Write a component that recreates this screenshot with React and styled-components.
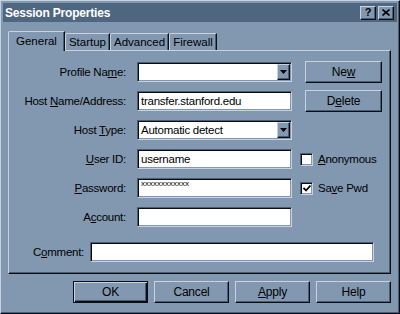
import React from "react";
import styled, { createGlobalStyle } from "styled-components";

const C = {
  face: "#8298b1",
  light: "#c7d2de",
  shadow: "#4b5d74",
  dark: "#0a0d12",
  title: "#4f6681",
};

const GlobalStyle = createGlobalStyle`
  html, body { margin: 0; padding: 0; background: ${C.face}; }
  body { font-family: "Liberation Sans", Arial, sans-serif; font-size: 11px; color: #000; }
`;

const Window = styled.div`
  box-sizing: border-box;
  width: 400px;
  height: 314px;
  padding: 2px;
  background: ${C.face};
  border: 1px solid;
  border-color: ${C.light} ${C.dark} ${C.dark} ${C.light};
  box-shadow: inset -1px -1px 0 ${C.shadow};
  display: flex;
  flex-direction: column;
`;

const TitleBar = styled.div`
  height: 19px;
  background: ${C.title};
  display: flex;
  align-items: center;
  padding: 0 3px 0 2px;
  gap: 2px;
`;

const Title = styled.div`
  flex: 1;
  color: #fff;
  font-weight: bold;
  font-size: 12px;
  letter-spacing: -0.2px;
`;

const TitleButton = styled.div`
  box-sizing: border-box;
  width: 16px;
  height: 14px;
  background: ${C.face};
  border: 1px solid;
  border-color: ${C.light} ${C.dark} ${C.dark} ${C.light};
  box-shadow: inset -1px -1px 0 ${C.shadow};
  display: flex;
  align-items: center;
  justify-content: center;
  font-weight: bold;
  font-size: 11px;
  line-height: 1;
`;

const TabsRow = styled.div`
  margin-top: 9px;
  height: 19px;
  padding-left: 5px;
  display: flex;
  align-items: flex-end;
`;

const Tab = styled.div`
  box-sizing: border-box;
  position: relative;
  z-index: ${(p) => (p.$active ? 1 : 0)};
  height: ${(p) => (p.$active ? 20 : 17)}px;
  margin-bottom: ${(p) => (p.$active ? -1 : 0)}px;
  padding: 0 ${(p) => (p.$active ? 7 : 3)}px;
  padding-bottom: ${(p) => (p.$active ? 2 : 0)}px;
  background: ${C.face};
  border: 1px solid;
  border-bottom: none;
  border-color: ${C.light} ${C.dark} transparent ${C.light};
  border-top-left-radius: 2px;
  box-shadow: inset -1px 0 0 ${C.shadow};
  display: flex;
  align-items: center;
  font-size: 11.5px;
  white-space: nowrap;
`;

const Panel = styled.div`
  box-sizing: border-box;
  margin: 0 6px 0 5px;
  height: 224px;
  border: 1px solid;
  border-color: ${C.light} ${C.dark} ${C.dark} ${C.light};
  box-shadow: inset -1px -1px 0 ${C.shadow};
  padding-top: 11px;
`;

const Form = styled.div`
  display: grid;
  grid-template-columns: 117px 155px 77px;
  grid-auto-rows: 20px;
  column-gap: 11px;
  row-gap: 9px;
  align-items: center;
`;

const Label = styled.div`
  text-align: right;
  font-size: 11.5px;
  letter-spacing: -0.25px;
  white-space: nowrap;
`;

const Key = styled.span`
  text-decoration: underline;
  text-underline-offset: 1px;
`;

const Field = styled.div`
  box-sizing: border-box;
  height: 20px;
  width: ${(p) => p.$width || 155}px;
  background: #fff;
  border: 1px solid;
  border-color: ${C.shadow} ${C.light} ${C.light} ${C.shadow};
  box-shadow: inset 1px 1px 0 ${C.dark}, inset -1px -1px 0 ${C.face};
  display: flex;
  align-items: ${(p) => (p.$masked ? "flex-start" : "center")};
  padding: 0 ${(p) => (p.$select ? 1 : 3)}px 0 3px;
  font-size: ${(p) => (p.$masked ? 8 : 11.5)}px;
  letter-spacing: ${(p) => (p.$masked ? 0 : -0.25)}px;
  white-space: nowrap;
  overflow: hidden;
`;

const FieldText = styled.span`
  flex: 1;
`;

const ArrowButton = styled.div`
  box-sizing: border-box;
  width: 13px;
  height: 16px;
  background: ${C.face};
  border: 1px solid;
  border-color: ${C.light} ${C.dark} ${C.dark} ${C.light};
  box-shadow: inset -1px -1px 0 ${C.shadow};
  display: flex;
  align-items: center;
  justify-content: center;
`;

const Button = styled.div`
  box-sizing: border-box;
  width: ${(p) => p.$width || 75}px;
  height: 22px;
  margin-left: ${(p) => p.$offset || 0}px;
  background: ${C.face};
  border: 1px solid;
  border-color: ${(p) =>
    p.$default ? C.dark : `${C.light} ${C.dark} ${C.dark} ${C.light}`};
  box-shadow: ${(p) =>
    p.$default
      ? `inset 1px 1px 0 ${C.light}, inset -1px -1px 0 ${C.dark}, inset -2px -2px 0 ${C.shadow}`
      : `inset -1px -1px 0 ${C.shadow}`};
  display: flex;
  align-items: center;
  justify-content: center;
  font-size: 12px;
  letter-spacing: -0.2px;
`;

const Check = styled.label`
  display: flex;
  align-items: center;
  gap: 5px;
  margin-left: -3px;
  font-size: 11.5px;
  letter-spacing: -0.25px;
  white-space: nowrap;
`;

const Box = styled.div`
  box-sizing: border-box;
  width: 13px;
  height: 13px;
  background: #fff;
  border: 1px solid;
  border-color: ${C.shadow} ${C.light} ${C.light} ${C.shadow};
  box-shadow: inset 1px 1px 0 ${C.dark}, inset -1px -1px 0 ${C.face};
  display: flex;
  align-items: center;
  justify-content: center;
`;

const CommentRow = styled.div`
  margin-top: 15px;
  padding-left: 24px;
  display: flex;
  align-items: center;
  gap: 10px;
`;

const CommentLabel = styled(Label)`
  width: 47px;
`;

const ButtonBar = styled.div`
  margin: 7px 6px 0 0;
  display: flex;
  justify-content: flex-end;
  gap: 6px;
`;

const DownArrow = () => (
  <svg width="7" height="4" viewBox="0 0 7 4">
    <path d="M0 0h7L3.5 4z" fill="#000" />
  </svg>
);

const CloseGlyph = () => (
  <svg width="8" height="7" viewBox="0 0 8 7">
    <path d="M0.5 0.5L7.5 6.5M7.5 0.5L0.5 6.5" stroke="#000" strokeWidth="1.6" />
  </svg>
);

const Tick = () => (
  <svg width="8" height="7" viewBox="0 0 8 7">
    <path d="M0.5 3L3 5.5L7.5 0.5" stroke="#000" strokeWidth="1.8" fill="none" />
  </svg>
);

const Select = ({ value }) => (
  <Field $select>
    <FieldText>{value}</FieldText>
    <ArrowButton>
      <DownArrow />
    </ArrowButton>
  </Field>
);

const CheckBox = ({ checked, children }) => (
  <Check>
    <Box>{checked && <Tick />}</Box>
    <span>{children}</span>
  </Check>
);

const tabs = ["General", "Startup", "Advanced", "Firewall"];

export default function App() {
  return (
    <>
      <GlobalStyle />
      <Window>
        <TitleBar>
          <Title>Session Properties</Title>
          <TitleButton>?</TitleButton>
          <TitleButton>
            <CloseGlyph />
          </TitleButton>
        </TitleBar>
        <TabsRow>
          {tabs.map((t, i) => (
            <Tab key={t} $active={i === 0}>
              {t}
            </Tab>
          ))}
        </TabsRow>
        <Panel>
          <Form>
            <Label>
              Profile Na<Key>m</Key>e:
            </Label>
            <Select value="" />
            <Button $width={77} $offset={2}>
              Ne<Key>w</Key>
            </Button>

            <Label>
              Host <Key>N</Key>ame/Address:
            </Label>
            <Field>transfer.stanford.edu</Field>
            <Button $width={77} $offset={2}>
              D<Key>e</Key>lete
            </Button>

            <Label>
              Host <Key>T</Key>ype:
            </Label>
            <Select value="Automatic detect" />
            <div />

            <Label>
              <Key>U</Key>ser ID:
            </Label>
            <Field>username</Field>
            <CheckBox>
              <Key>A</Key>nonymous
            </CheckBox>

            <Label>
              <Key>P</Key>assword:
            </Label>
            <Field $masked>xxxxxxxxxxxx</Field>
            <CheckBox checked>
              Sa<Key>v</Key>e Pwd
            </CheckBox>

            <Label>
              A<Key>c</Key>count:
            </Label>
            <Field />
            <div />
          </Form>
          <CommentRow>
            <CommentLabel>
              C<Key>o</Key>mment:
            </CommentLabel>
            <Field $width={284} />
          </CommentRow>
        </Panel>
        <ButtonBar>
          <Button $default>OK</Button>
          <Button>Cancel</Button>
          <Button>
            <Key>A</Key>pply
          </Button>
          <Button>Help</Button>
        </ButtonBar>
      </Window>
    </>
  );
}
